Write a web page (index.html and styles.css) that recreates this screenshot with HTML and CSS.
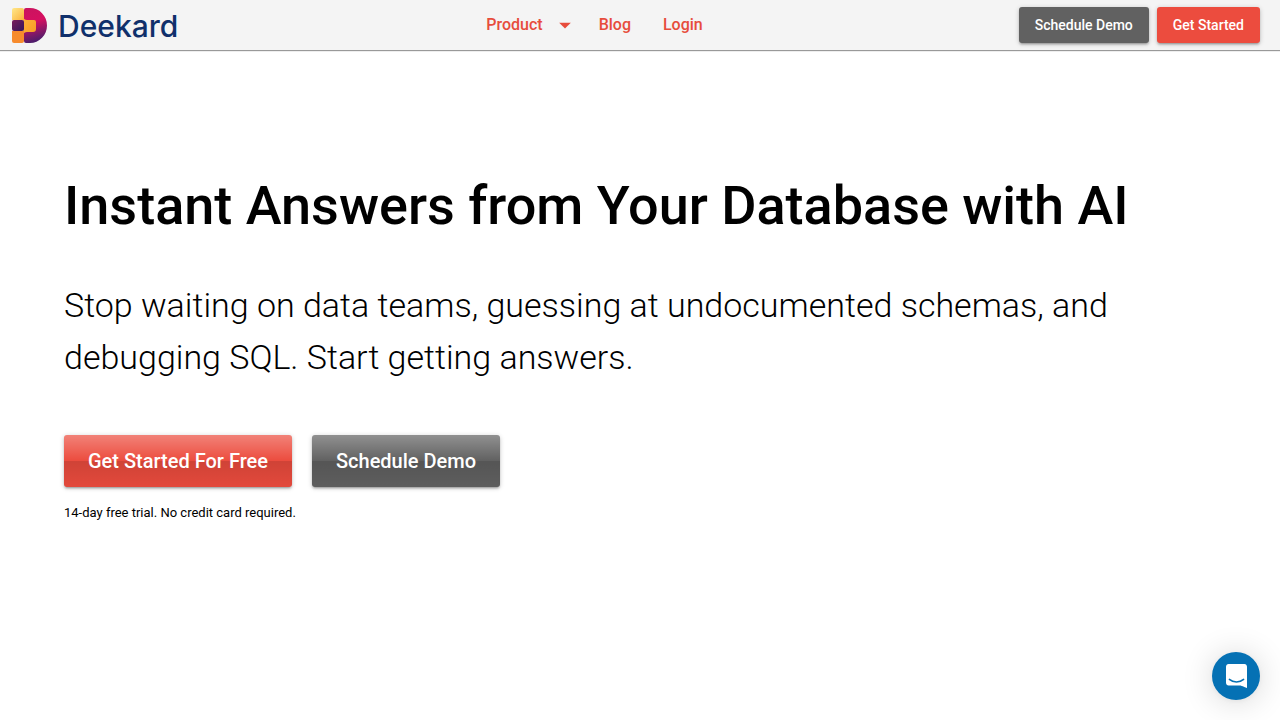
FILE: index.html
```html
<!DOCTYPE html>
<html lang="en">
<head>
<meta charset="utf-8">
<meta name="viewport" content="width=device-width, initial-scale=1">
<title>Deekard</title>
<link rel="stylesheet" href="styles.css">
</head>
<body>
<header class="topbar">
  <a class="brand" href="#">
    <svg class="brand-mark" viewBox="0 0 36 36" aria-hidden="true">
      <defs>
        <linearGradient id="bowl" x1="0" y1="0" x2="0.2" y2="1">
          <stop offset="0" stop-color="#c9145f"/>
          <stop offset="0.45" stop-color="#d60f60"/>
          <stop offset="1" stop-color="#4f1c6b"/>
        </linearGradient>
        <linearGradient id="sun" x1="0" y1="0" x2="1" y2="1">
          <stop offset="0" stop-color="#ffe88a"/>
          <stop offset="1" stop-color="#fbb03a"/>
        </linearGradient>
        <linearGradient id="arm" x1="0" y1="0" x2="1" y2="1">
          <stop offset="0" stop-color="#fcb53c"/>
          <stop offset="1" stop-color="#f99a22"/>
        </linearGradient>
        <linearGradient id="core" x1="0" y1="0" x2="1" y2="1">
          <stop offset="0" stop-color="#7a1c5c"/>
          <stop offset="1" stop-color="#33185c"/>
        </linearGradient>
      </defs>
      <path fill="url(#bowl)" d="M14 1h4a17 17.500 0 0 1 0 35h-4q-2 0-2-2V3q0-2 2-2z"/>
      <path fill="url(#sun)" d="M2 1h8q2 0 2 2v10H0V3q0-2 2-2z"/>
      <path fill="url(#arm)" d="M11 10q1 3 4 3h7q2 0 2 2v7q0 3-3 3h-6q-3 0-4 3z"/>
      <path fill="#f78b2d" d="M0 24h12v10q0 2-2 2H2q-2 0-2-2z"/>
      <rect x="0" y="13" width="12" height="11" rx="2" fill="url(#core)"/>
    </svg>
    <span class="brand-name">Deekard</span>
  </a>
  <nav class="menu" aria-label="Main">
    <button class="menu-item menu-product" type="button">Product
      <svg class="caret" viewBox="0 0 24 24" aria-hidden="true"><path d="M7 10l5 5 5-5z" fill="currentColor"/></svg>
    </button>
    <a class="menu-item" href="#">Blog</a>
    <a class="menu-item" href="#">Login</a>
  </nav>
  <div class="actions">
    <button class="btn btn-grey" type="button">Schedule Demo</button>
    <button class="btn btn-red" type="button">Get Started</button>
  </div>
</header>
<main class="hero">
  <h1 class="title">Instant Answers from Your Database with AI</h1>
  <p class="lead">Stop waiting on data teams, guessing at undocumented schemas, and debugging SQL. Start getting answers.</p>
  <div class="cta">
    <button class="btn btn-large btn-red glossy" type="button">Get Started For Free</button>
    <button class="btn btn-large btn-grey glossy" type="button">Schedule Demo</button>
  </div>
  <p class="note">14-day free trial. No credit card required.</p>
</main>
<button class="chat" type="button" aria-label="Open chat">
  <svg class="chat-icon" viewBox="0 0 28 32" aria-hidden="true"><path fill="#fff" d="M28 32s-4.700-1.900-8.500-3.400H3.400C1.500 28.600 0 27 0 25V3.600C0 1.600 1.500 0 3.400 0h21.200C26.500 0 28 1.600 28 3.600V32z"/><path fill="none" stroke="#0571b4" stroke-width="2" stroke-linecap="round" d="M4.500 20.500c5.500 4.700 13.500 4.700 19 0"/></svg>
</button>
</body>
</html>
```
FILE: styles.css
```css
* { box-sizing: border-box; }

body {
  margin: 0;
  background: #fff;
  color: #000;
  font-family: Roboto, "Liberation Sans", sans-serif;
}

button {
  border: 0;
  font-family: inherit;
  cursor: pointer;
}

a { text-decoration: none; }

.topbar {
  display: flex;
  align-items: center;
  justify-content: space-between;
  height: 50px;
  padding: 0 20px 0 12px;
  background: #f4f4f4;
  box-shadow: 0 1px 1px rgba(0, 0, 0, 0.4);
}

.brand {
  display: flex;
  align-items: center;
  gap: 10px;
}

.brand-mark {
  width: 36px;
  height: 36px;
}

.brand-name {
  padding-top: 2px;
  color: #10306b;
  font-family: Inter, sans-serif;
  font-size: 30px;
  font-weight: 500;
  line-height: 36px;
}

.menu {
  display: flex;
  align-items: center;
  padding-right: 8px;
}

.menu-item {
  display: flex;
  align-items: center;
  padding: 0 16px;
  background: none;
  color: #e74c3c;
  font-size: 16px;
  font-weight: 500;
  line-height: 24px;
}

.menu-product {
  gap: 8px;
  padding-right: 4px;
}

.caret {
  width: 28px;
  height: 28px;
}

.actions {
  display: flex;
  gap: 8px;
}

.btn {
  padding: 8px 16px;
  border-radius: 3px;
  color: #fff;
  font-size: 14px;
  font-weight: 500;
  line-height: 20px;
  box-shadow: 0 1px 5px rgba(0, 0, 0, 0.2), 0 2px 2px rgba(0, 0, 0, 0.14), 0 3px 1px -2px rgba(0, 0, 0, 0.12);
}

.btn-red { background-color: #ec4c3e; }
.btn-grey { background-color: #616161; }

.btn-large {
  padding: 12px 24px;
  font-size: 20px;
  line-height: 28px;
}

.glossy {
  background-image: linear-gradient(to bottom, rgba(255, 255, 255, 0.3), rgba(255, 255, 255, 0) 50%, rgba(0, 0, 0, 0.12) 51%, rgba(0, 0, 0, 0.04));
}

.hero { padding: 120px 64px 64px; }

.title {
  margin: 0;
  font-size: 54px;
  font-weight: 500;
  line-height: 72px;
}

.lead {
  margin: 37px 0 0;
  font-size: 34px;
  font-weight: 300;
  line-height: 52px;
}

.cta {
  display: flex;
  gap: 20px;
  margin-top: 52px;
}

.note {
  margin: 16px 0 0;
  font-size: 13px;
  line-height: 20px;
}

.chat {
  position: fixed;
  right: 20px;
  bottom: 20px;
  display: flex;
  align-items: center;
  justify-content: center;
  width: 48px;
  height: 48px;
  padding: 0;
  border-radius: 50%;
  background: #0571b4;
  box-shadow: 0 1px 6px rgba(0, 0, 0, 0.06), 0 2px 32px rgba(0, 0, 0, 0.16);
}

.chat-icon {
  width: 21px;
  height: 24px;
}
```
